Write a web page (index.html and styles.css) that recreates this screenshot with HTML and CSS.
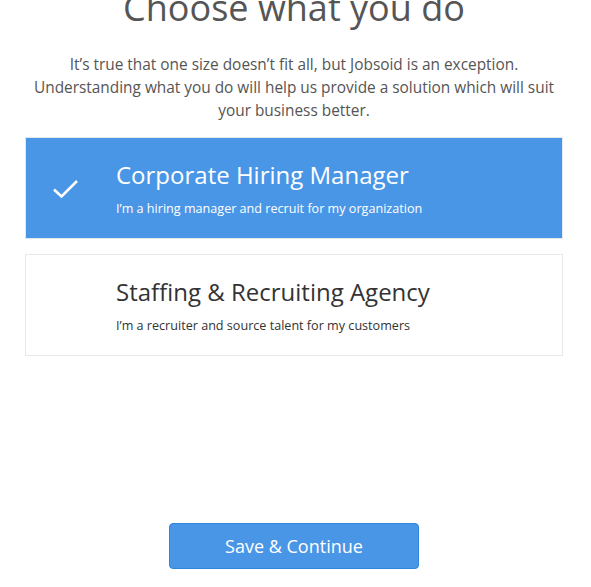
FILE: index.html
```html
<!DOCTYPE html>
<html>
<head>
<meta charset="utf-8">
<link rel="stylesheet" href="styles.css">
</head>
<body>
<div class="page">
  <h1 class="title">Choose what you do</h1>
  <p class="intro">It’s true that one size doesn’t fit all, but Jobsoid is an exception. Understanding what you do will help us provide a solution which will suit your business better.</p>
  <div class="options">
    <div class="option selected">
      <div class="check">
        <svg width="27" height="21" viewBox="0 0 27 21"><path d="M2 11.5 L9.5 18.5 L25 3" fill="none" stroke="#fff" stroke-width="2.6"/></svg>
      </div>
      <div class="option-text">
        <div class="option-title">Corporate Hiring Manager</div>
        <div class="option-sub">I’m a hiring manager and recruit for my organization</div>
      </div>
    </div>
    <div class="option">
      <div class="check"></div>
      <div class="option-text">
        <div class="option-title">Staffing &amp; Recruiting Agency</div>
        <div class="option-sub">I’m a recruiter and source talent for my customers</div>
      </div>
    </div>
  </div>
  <div class="actions">
    <button class="btn">Save &amp; Continue</button>
  </div>
</div>
</body>
</html>
```
FILE: styles.css
```css
html, body {
  margin: 0;
  padding: 0;
  background: #fff;
}
body {
  font-family: "Open Sans", "Liberation Sans", sans-serif;
  color: #555;
}
.page {
  width: 538px;
  margin-left: 25px;
  display: flex;
  flex-direction: column;
}
.title {
  margin: -17px 0 0 0;
  font-size: 36px;
  font-weight: 400;
  line-height: 50px;
  text-align: center;
  color: #555;
}
.intro {
  margin: 20px 0 0 0;
  font-size: 15.4px;
  line-height: 23px;
  text-align: center;
  color: #555;
}
.options {
  margin-top: 15px;
  display: flex;
  flex-direction: column;
  gap: 15px;
}
.option {
  height: 100px;
  border: 1px solid #e8e8e8;
  display: flex;
  background: #fff;
}
.option.selected {
  background: #4a96e6;
  border-color: #e3e8ee;
}
.check {
  width: 90px;
  align-self: center;
  display: flex;
  padding-left: 26px;
  box-sizing: border-box;
}
.check svg {
  display: block;
}
.option-text {
  display: flex;
  flex-direction: column;
  padding-top: 21px;
}
.option-title {
  font-size: 24px;
  line-height: 32px;
  color: #333;
}
.option-sub {
  margin-top: 9px;
  font-size: 12.6px;
  line-height: 18px;
  color: #333;
}
.selected .option-title,
.selected .option-sub {
  color: #fff;
}
.actions {
  margin-top: 167px;
  display: flex;
  justify-content: center;
}
.btn {
  width: 250px;
  height: 46px;
  border: 1px solid #2f86da;
  border-radius: 4px;
  background: #4a96e6;
  color: #fff;
  font-family: "Open Sans", "Liberation Sans", sans-serif;
  font-size: 18px;
  cursor: pointer;
}
```
